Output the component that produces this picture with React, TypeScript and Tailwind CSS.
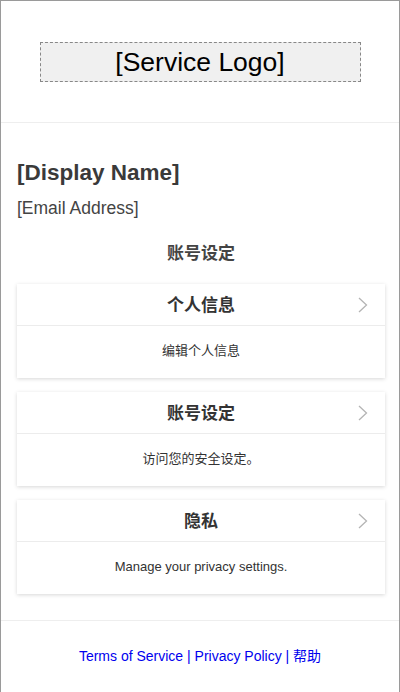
const sans = "font-['Liberation_Sans','Noto_Sans_CJK_SC',sans-serif]";

const sections = [
  { title: '个人信息', desc: '编辑个人信息' },
  { title: '账号设定', desc: '访问您的安全设定。' },
  { title: '隐私', desc: 'Manage your privacy settings.' },
];

const Chevron = () => (
  <svg
    className="absolute right-[17px] top-[13px] h-[16px] w-[10px]"
    viewBox="0 0 10 16"
    fill="none"
    stroke="#b4b4b4"
    strokeWidth="1.3"
  >
    <polyline points="1,1 8.5,8 1,15" />
  </svg>
);

const SettingCard = ({ title, desc }: { title: string; desc: string }) => (
  <div className="bg-white shadow-[0_1px_4px_rgba(0,0,0,0.16)]">
    <div className="relative flex h-[42px] items-center justify-center border-b border-[#ececec]">
      <span className="translate-y-[1px] text-[17px] font-bold text-[#333]">{title}</span>
      <Chevron />
    </div>
    <div className="flex h-[52px] items-center justify-center pb-[2px] text-[13px] text-[#333]">{desc}</div>
  </div>
);

export default function App() {
  return (
    <div className={`${sans} min-h-[700px] w-[400px] border border-b-0 border-[#9a9a9a] bg-white`}>
      <header className="flex justify-center border-b border-[#eeeeee] pb-[40px] pt-[41px]">
        <div className="flex h-[40px] w-[321px] items-center justify-center border border-dashed border-[#888] bg-[#f0f0f0] text-[26.5px] leading-none text-black">
          [Service Logo]
        </div>
      </header>

      <main className="pb-[26px] pl-[16px] pr-[14px] pt-[37px]">
        <h2 className="text-[22.5px] font-bold leading-[26px] text-[#3a3a3a]">[Display Name]</h2>
        <p className="mt-[12px] text-[17.5px] leading-[20px] text-[#444]">[Email Address]</p>
        <h3 className="mt-[24px] text-center text-[17px] font-bold leading-[24px] text-[#444]">账号设定</h3>

        <div className="mt-[18px] flex flex-col gap-[14px]">
          {sections.map((s) => (
            <SettingCard key={s.title} title={s.title} desc={s.desc} />
          ))}
        </div>
      </main>

      <footer className="border-t border-[#eeeeee] pt-[25px] text-center text-[14px] leading-[20px] text-[#0000ee]">
        <a href="#">Terms of Service</a> | <a href="#">Privacy Policy</a> | <a href="#">帮助</a>
      </footer>
    </div>
  );
}
